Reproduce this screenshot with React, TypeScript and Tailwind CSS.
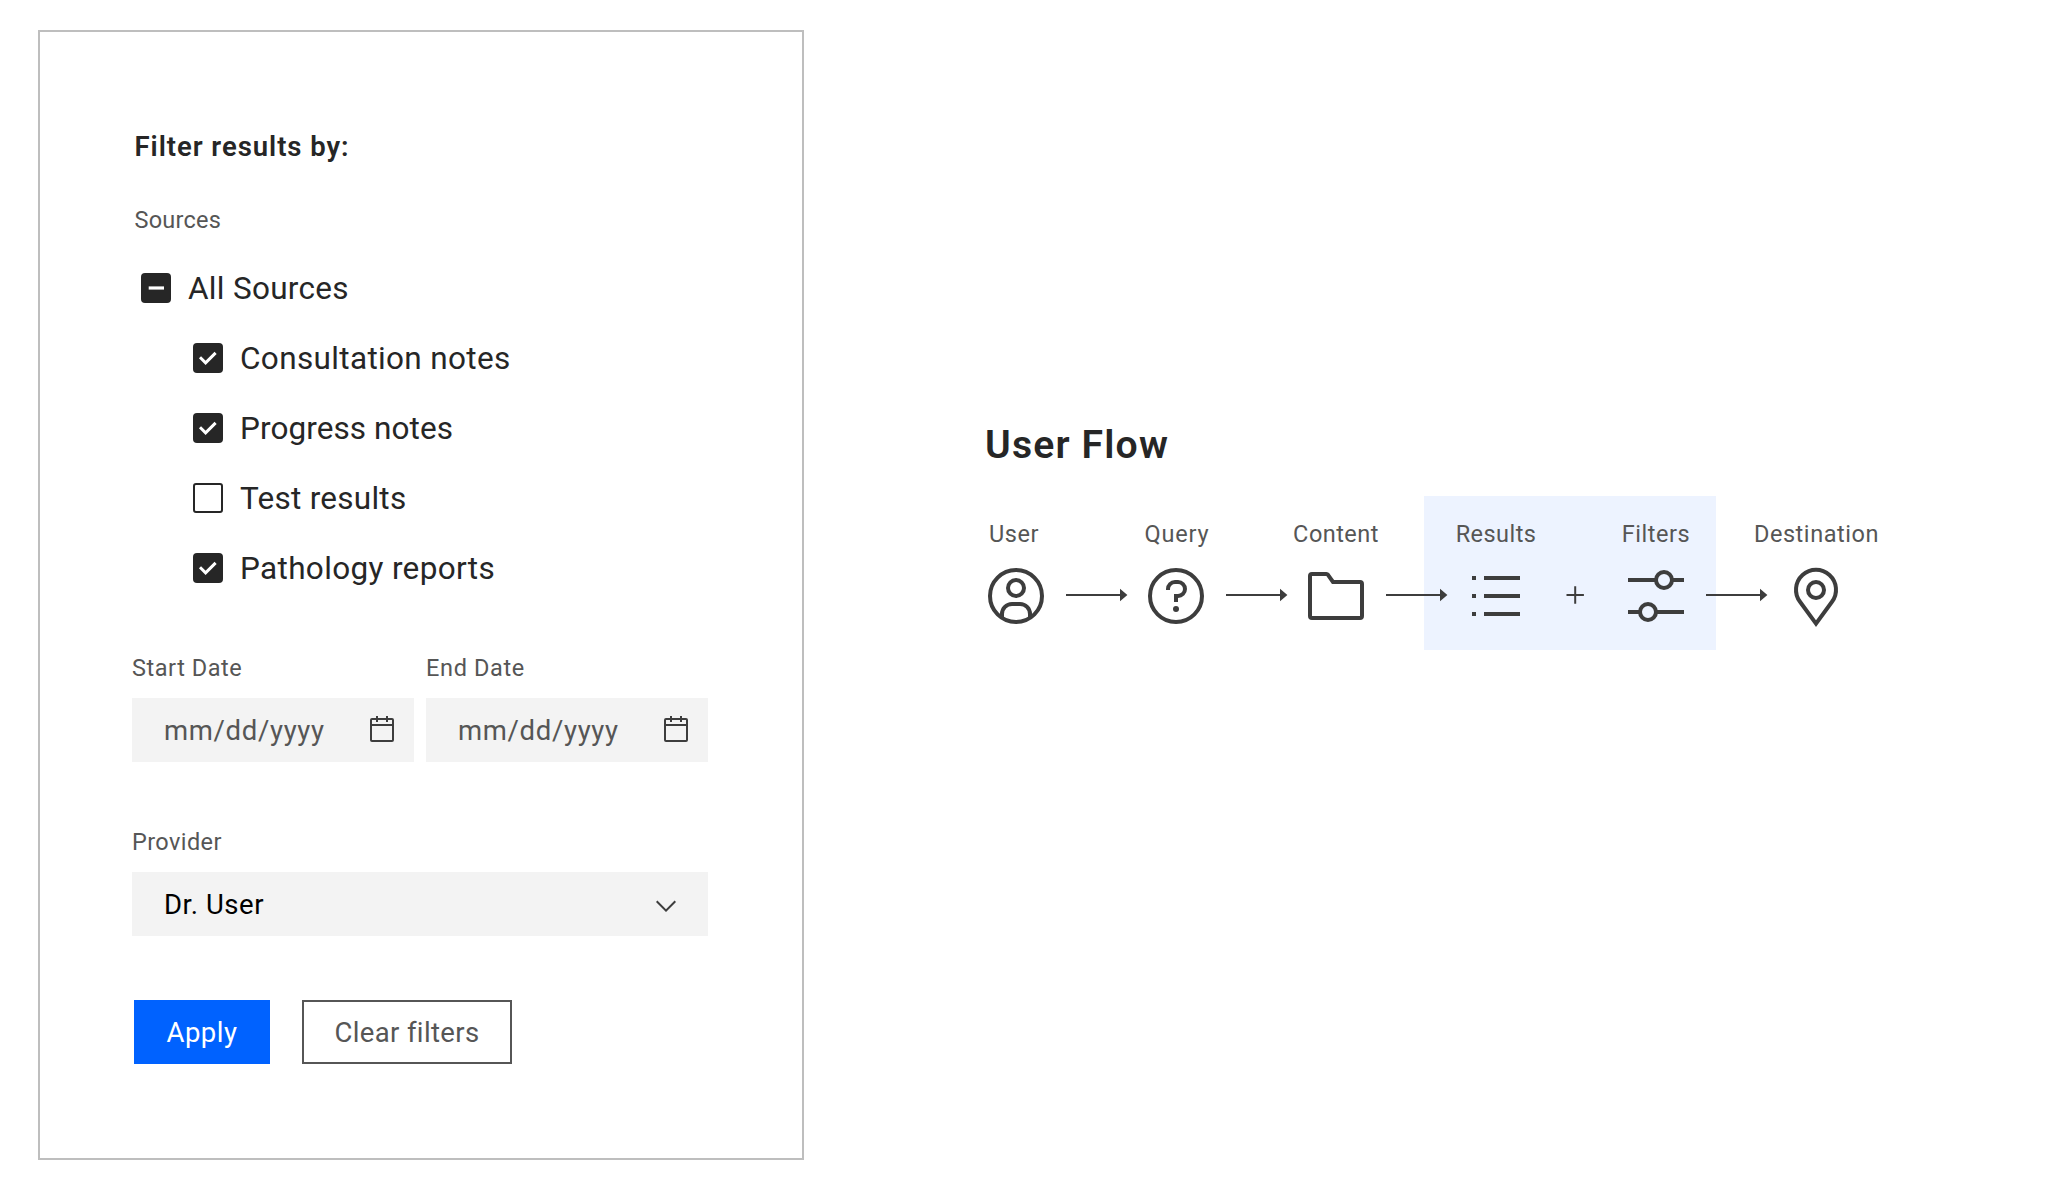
import type { ReactNode } from "react";

type CheckState = "checked" | "unchecked" | "mixed";

function Checkbox({ state }: { state: CheckState }) {
  if (state === "unchecked") {
    return <span className="size-[30px] shrink-0 rounded-[3px] border-2 border-[#262626] bg-white" />;
  }
  return (
    <span className="size-[30px] shrink-0 rounded-[4px] bg-[#262626]">
      <svg viewBox="0 0 30 30" className="size-[30px]" fill="none" stroke="#fff">
        {state === "mixed" ? (
          <path d="M7.7 15H23" strokeWidth="3.2" />
        ) : (
          <path d="M7 14.3 12.6 19.9 22.6 9.9" strokeWidth="3" />
        )}
      </svg>
    </span>
  );
}

function CheckRow({ state, label, className }: { state: CheckState; label: string; className: string }) {
  return (
    <label className={`flex h-[70px] items-center text-[31.5px] text-[#262626] ${className}`}>
      <Checkbox state={state} />
      <span className="ml-[17px] pt-[2px] leading-[40px] whitespace-nowrap">{label}</span>
    </label>
  );
}

function CalendarIcon() {
  return (
    <svg viewBox="0 0 32 32" className="size-8" fill="#3d3d3d">
      <path d="M26 4h-4V2h-2v2h-8V2h-2v2H6a2 2 0 0 0-2 2v20a2 2 0 0 0 2 2h20a2 2 0 0 0 2-2V6a2 2 0 0 0-2-2Zm0 22H6V12h20Zm0-16H6V6h4v2h2V6h8v2h2V6h4Z" />
    </svg>
  );
}

function DateField({ label, className }: { label: string; className: string }) {
  return (
    <div className="w-[282px]">
      <div className={`text-[23.5px] leading-6 text-[#565656] ${className}`}>{label}</div>
      <div className="mt-[18px] flex h-16 items-center justify-between bg-[#f3f3f3] pr-4 pl-8">
        <span className="pt-[2px] text-[27.5px] tracking-[0.67px] text-[#565656]">mm/dd/yyyy</span>
        <CalendarIcon />
      </div>
    </div>
  );
}

function FlowIcon({ children }: { children: ReactNode }) {
  return (
    <svg viewBox="0 0 32 32" className="size-16" fill="none" stroke="#3d3d3d" strokeWidth="2">
      {children}
    </svg>
  );
}

function FlowStep({ label, className, children }: { label: string; className: string; children: ReactNode }) {
  return (
    <div className="flex w-16 flex-col items-center">
      <span className={`mb-[18px] text-[23.5px] leading-6 whitespace-nowrap text-[#565656] ${className}`}>{label}</span>
      <FlowIcon>{children}</FlowIcon>
    </div>
  );
}

function Connector({ plus = false }: { plus?: boolean }) {
  return (
    <svg viewBox="0 0 96 64" className="h-16 w-24" fill="#3d3d3d">
      {plus ? (
        <path d="M38.5 30h7.7v-7.7h2V30h7.7v2h-7.7v7.7h-2V32h-7.7z" />
      ) : (
        <path d="M18 30h54v-5.3l7.4 6.3-7.4 6.3V32H18z" />
      )}
    </svg>
  );
}

function FilterPanel() {
  return (
    <section className="mt-[30px] ml-[38px] h-[1130px] w-[766px] shrink-0 border-2 border-[#bebebe] pt-[99px] pl-[92px]">
      <h2 className="ml-[2.5px] text-[27.5px] leading-8 font-semibold tracking-[0.95px] text-[#262626]">Filter results by:</h2>
      <div className="mt-[45px] ml-[2.5px] text-[23.5px] leading-6 tracking-[0.25px] text-[#565656]">Sources</div>
      <div className="mt-[21px]">
        <CheckRow state="mixed" label="All Sources" className="ml-[9px] tracking-[0.3px]" />
        <CheckRow state="checked" label="Consultation notes" className="ml-[61px] tracking-[0.35px]" />
        <CheckRow state="checked" label="Progress notes" className="ml-[61px] tracking-[0.08px]" />
        <CheckRow state="unchecked" label="Test results" className="ml-[61px] tracking-[0.26px]" />
        <CheckRow state="checked" label="Pathology reports" className="ml-[61px] tracking-[0.34px]" />
      </div>
      <div className="mt-[53px] flex gap-3">
        <DateField label="Start Date" className="tracking-[0.55px]" />
        <DateField label="End Date" className="tracking-[0.65px]" />
      </div>
      <div className="mt-[68px] w-[576px]">
        <div className="text-[23.5px] leading-6 tracking-[0.4px] text-[#565656]">Provider</div>
        <div className="mt-[18px] flex h-16 items-center justify-between bg-[#f3f3f3] pr-[26px] pl-8">
          <span className="pt-[2px] text-[27.5px] tracking-[0.55px] text-black">Dr. User</span>
          <svg viewBox="0 0 32 32" className="mt-1 size-8" fill="#3d3d3d">
            <path d="M16 22 6 12l1.4-1.4 8.6 8.6 8.6-8.6L26 12z" />
          </svg>
        </div>
      </div>
      <div className="mt-16 ml-[2px] flex gap-8">
        <button className="h-16 w-[136px] bg-[#0062ff] pt-[2px] text-[27.5px] tracking-[0.5px] text-white">Apply</button>
        <button className="h-16 w-[210px] border-2 border-[#565656] pt-[2px] text-[27.5px] tracking-[0.35px] text-[#565656]">Clear filters</button>
      </div>
    </section>
  );
}

function UserFlow() {
  return (
    <section className="mt-[421px] ml-[180px]">
      <h1 className="ml-px text-[39.2px] leading-[48px] font-semibold tracking-[1.15px] text-[#262626]">User Flow</h1>
      <div className="relative mt-[53px]">
        <div className="absolute -top-[26px] left-[440px] h-[154px] w-[292px] bg-[#edf3ff]" />
        <div className="relative flex items-end">
          <FlowStep label="User" className="mr-[4px] tracking-[0.6px]">
            <circle cx="16" cy="16" r="13" />
            <circle cx="16" cy="12" r="4" />
            <path d="M9 26.5V25a5 5 0 0 1 5-5h4a5 5 0 0 1 5 5v1.5" />
          </FlowStep>
          <Connector />
          <FlowStep label="Query" className="ml-[2px] tracking-[0.85px]">
            <circle cx="16" cy="16" r="13" />
            <path d="M12 13v-.5A3.5 3.5 0 0 1 15.5 9H17a3.5 3.5 0 0 1 0 7h-1v3" />
            <circle cx="16" cy="22.5" r="1.5" fill="#3d3d3d" stroke="none" />
          </FlowStep>
          <Connector />
          <FlowStep label="Content" className="tracking-[0.47px]">
            <path d="M3 6a1 1 0 0 1 1-1h7.2a1 1 0 0 1 .8.4L14.5 9H28a1 1 0 0 1 1 1v16a1 1 0 0 1-1 1H4a1 1 0 0 1-1-1Z" />
          </FlowStep>
          <Connector />
          <FlowStep label="Results" className="tracking-[0.45px]">
            <path d="M4 7h2M4 16h2M4 25h2M10 7h18M10 16h18M10 25h18" />
          </FlowStep>
          <Connector plus />
          <FlowStep label="Filters" className="tracking-[0.55px]">
            <path d="M2 8h14M24 8h6M2 24h6M16 24h14" />
            <circle cx="20" cy="8" r="4" />
            <circle cx="12" cy="24" r="4" />
          </FlowStep>
          <Connector />
          <FlowStep label="Destination" className="ml-px tracking-[0.57px]">
            <path d="M16 29.8 8 18.9a10 10 0 1 1 16 0Z" />
            <circle cx="16" cy="13" r="4" />
          </FlowStep>
        </div>
      </div>
    </section>
  );
}

export default function App() {
  return (
    <main className="flex h-[1196px] w-[2048px] items-start overflow-hidden bg-white font-['Roboto',sans-serif]">
      <FilterPanel />
      <UserFlow />
    </main>
  );
}
